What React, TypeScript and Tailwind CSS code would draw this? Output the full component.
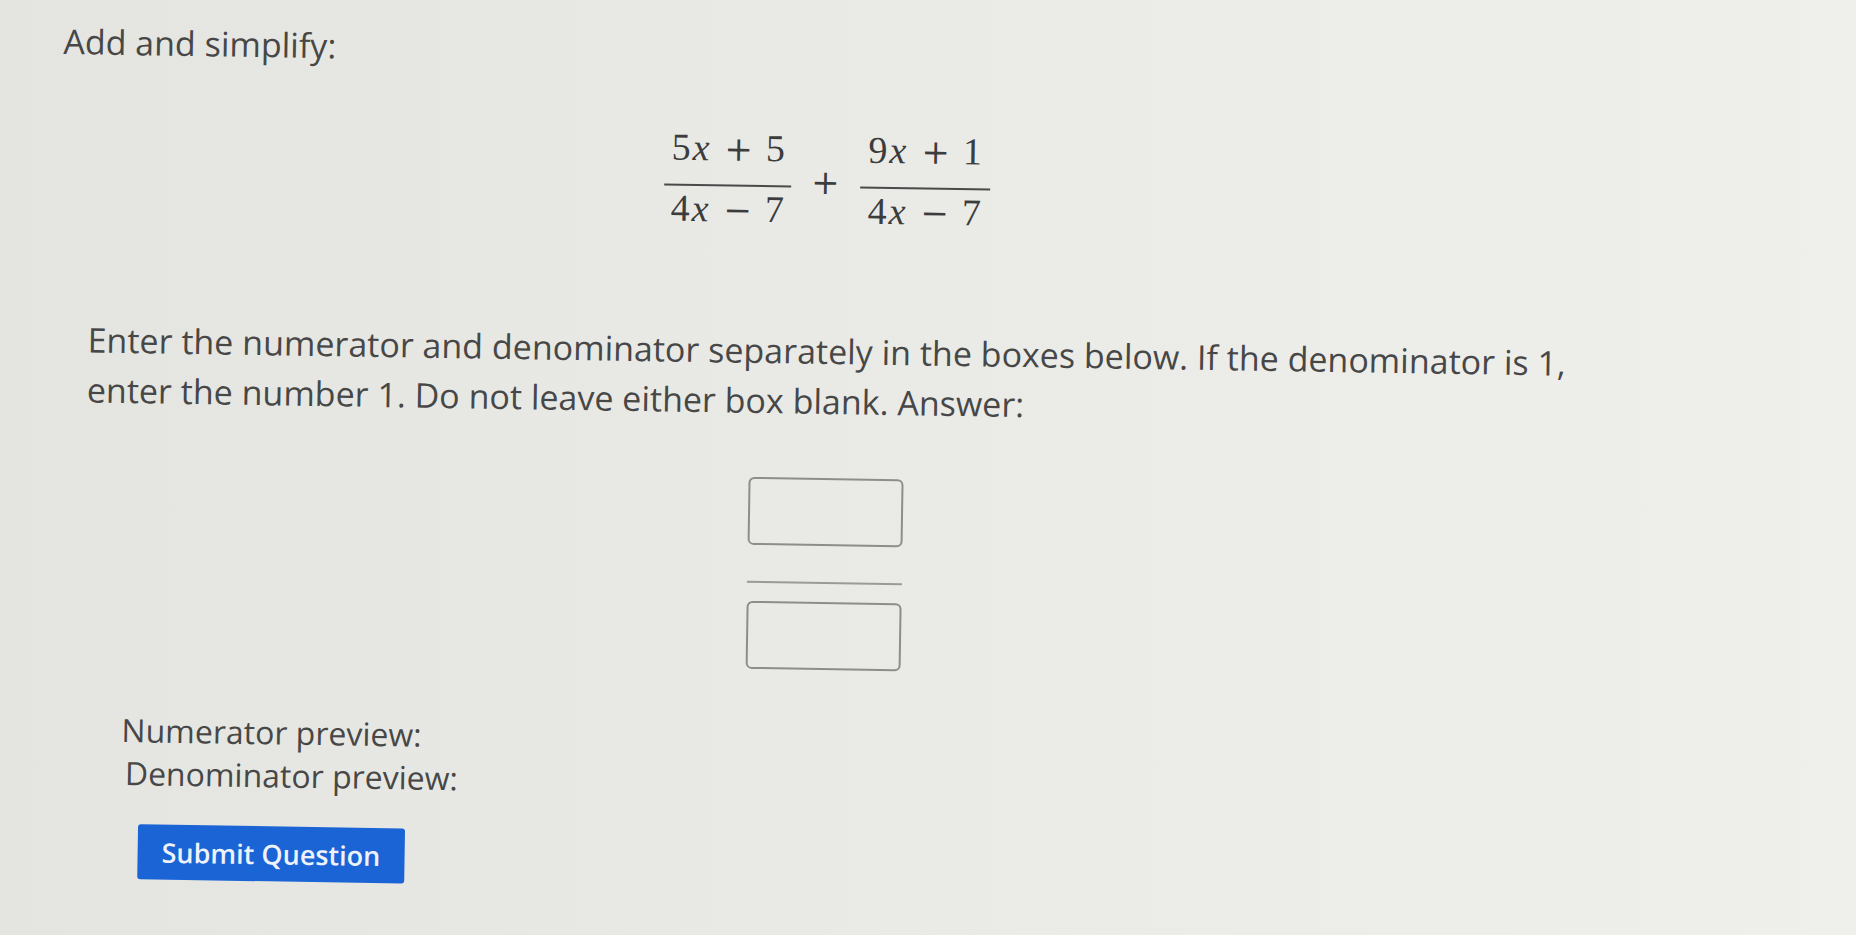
import React from 'react';

const sans = { fontFamily: '"Open Sans", "Noto Sans", Arial, sans-serif' };
const serif = { fontFamily: '"Liberation Serif", "DejaVu Serif", serif' };
const opFont = { fontFamily: '"DejaVu Serif", "Liberation Serif", serif' };

const X = () => <span className="mx-[2px] italic">x</span>;

const Fraction: React.FC<{ num: React.ReactNode; den: React.ReactNode; width: string }> = ({ num, den, width }) => (
  <div className={`flex flex-col items-center ${width}`}>
    <div className="h-[38px] whitespace-nowrap text-[38px] leading-[38px]">{num}</div>
    <div className="mt-[18px] h-[2px] w-full bg-[#4a4a4a]" />
    <div className="mt-[3px] h-[38px] whitespace-nowrap text-[38px] leading-[38px]">{den}</div>
  </div>
);

const Op: React.FC<{ children: React.ReactNode }> = ({ children }) => (
  <span className="mx-[13px] text-[34px] font-light" style={opFont}>
    {children}
  </span>
);

const AnswerBox = () => (
  <input
    type="text"
    aria-label="answer"
    className="block h-[68px] w-[155px] rounded-[6px] border-2 border-[#8d8d8b] bg-transparent outline-none"
  />
);

export default function App() {
  return (
    <div
      className="h-[935px] w-full overflow-hidden bg-linear-to-r from-[#e4e5e0] via-[#eaebe7] to-[#efefec] text-[#474747]"
      style={sans}
    >
      <div className="origin-top-left rotate-[0.9deg] pt-[18px]">
        <p className="ml-[64px] text-[34px] leading-[44px]">Add and simplify:</p>

        <div className="ml-[667px] mt-[55px] flex items-center text-[#3c3c3c]" style={serif}>
          <Fraction
            width="w-[127px]"
            num={<>5<X /><Op>+</Op>5</>}
            den={<>4<X /><Op>−</Op>7</>}
          />
          <span className="mx-[20px] mt-[4px] text-[34px] leading-none" style={opFont}>
            +
          </span>
          <Fraction
            width="w-[130px]"
            num={<>9<X /><Op>+</Op>1</>}
            den={<>4<X /><Op>−</Op>7</>}
          />
        </div>

        <p className="ml-[93px] mt-[97px] text-[34px] leading-[50px]">
          Enter the numerator and denominator separately in the boxes below. If the denominator is 1,
          <br />
          enter the number 1. Do not leave either box blank. Answer:
        </p>

        <div className="ml-[756px] mt-[52px] flex w-[155px] flex-col">
          <AnswerBox />
          <div className="mt-[36px] h-[2px] w-full bg-[#9a9a98]" />
          <div className="mt-[18px]">
            <AnswerBox />
          </div>
        </div>

        <div className="mt-[49px] text-[32px] leading-[43px]">
          <div className="ml-[133px]">Numerator preview:</div>
          <div className="ml-[137px]">Denominator preview:</div>
        </div>

        <button
          type="button"
          className="ml-[151px] mt-[30px] h-[55px] rounded-[3px] bg-[#1b64d6] px-[24px] text-[27px] font-semibold leading-[55px] text-[#eef2fa]"
        >
          Submit Question
        </button>
      </div>
    </div>
  );
}
